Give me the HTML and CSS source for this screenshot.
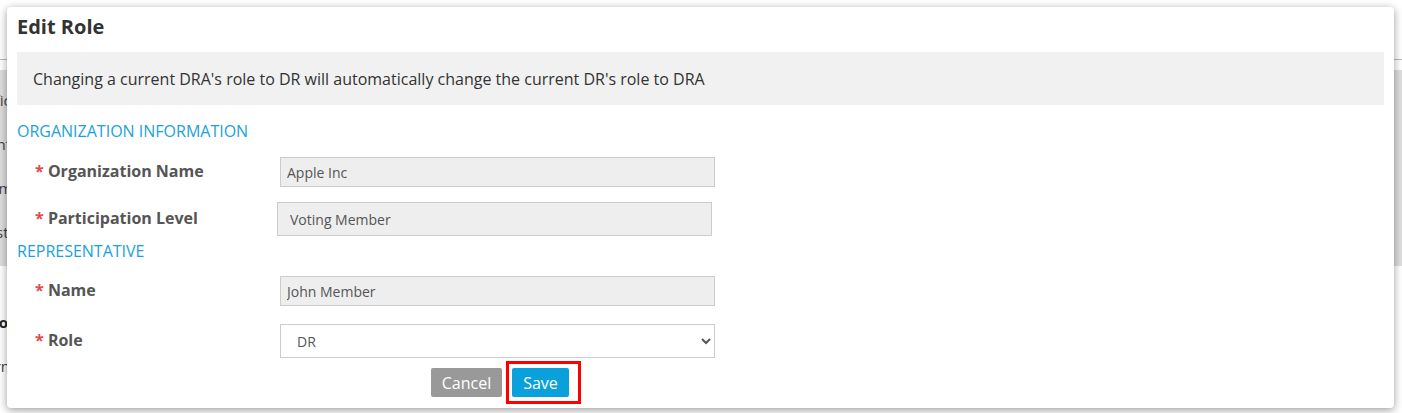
FILE: index.html
```html
<!doctype html>
<html lang="en">
<head>
    <meta charset="UTF-8">
    <meta name="viewport" content="width=device-width, initial-scale=1.0">
    <title>Edit Role</title>
    <link rel="stylesheet" href="styles.css">
</head>
<body>
    <!-- Page behind the dialog -->
    <div class="page">
        <div class="page-header"></div>
        <div class="page-band">
            <p class="cut">Office</p>
            <p class="cut">Contact</p>
            <p class="cut">Number</p>
            <p class="cut">Postal</p>
        </div>
        <p class="cut bold">Info</p>
        <p class="cut">Term</p>
    </div>

    <!-- Edit Role dialog -->
    <div class="modal">
        <h2 class="modal-title">Edit Role</h2>
        <div class="notice">Changing a current DRA's role to DR will automatically change the current DR's role to DRA</div>

        <form class="role-form">
            <h3 class="section-title">ORGANIZATION INFORMATION</h3>
            <div class="field first">
                <label><span class="req">*</span> Organization Name</label>
                <input type="text" value="Apple Inc" readonly>
            </div>
            <div class="field level">
                <label><span class="req">*</span> Participation Level</label>
                <input type="text" value="Voting Member" readonly>
            </div>

            <h3 class="section-title rep">REPRESENTATIVE</h3>
            <div class="field name">
                <label><span class="req">*</span> Name</label>
                <input type="text" value="John Member" readonly>
            </div>
            <div class="field role">
                <label><span class="req">*</span> Role</label>
                <select>
                    <option>DR</option>
                    <option>DRA</option>
                </select>
            </div>

            <div class="actions">
                <button type="button" class="btn cancel">Cancel</button>
                <span class="highlight"><button type="submit" class="btn save">Save</button></span>
            </div>
        </form>
    </div>
</body>
</html>
```

FILE: styles.css
```css
/* General Styles */
body {
    margin: 0;
    font-family: 'Open Sans', sans-serif;
    background-color: #fff;
    color: #333;
    overflow: hidden;
}

/* Page behind the dialog */
.page {
    height: 413px;
}

.page-header {
    height: 59px;
    border-bottom: 1px solid #bbb;
    margin-bottom: 10px;
}

.page-band {
    background-color: #dedede;
    height: 196px;
    padding-top: 20px;
    box-sizing: border-box;
}

.cut {
    margin: 0 0 24px -22px;
    font-size: 15px;
    line-height: 20px;
    color: #444;
}

.page > .cut:first-of-type {
    margin-top: 46px;
}

.cut.bold {
    font-weight: bold;
    color: #222;
}

/* Dialog */
.modal {
    position: absolute;
    left: 7px;
    top: 7px;
    width: 1387px;
    height: 401px;
    box-sizing: border-box;
    padding: 7px 10px 0;
    background-color: #fff;
    border-radius: 4px;
    box-shadow: 0 2px 9px rgba(0, 0, 0, 0.4);
}

.modal-title {
    margin: 0;
    font-size: 20px;
    line-height: 26px;
    font-weight: bold;
    color: #333;
}

.notice {
    margin-top: 12px;
    height: 53px;
    padding: 0 16px;
    display: flex;
    align-items: center;
    background-color: #f1f1f1;
    font-size: 16px;
    color: #333;
}

/* Form */
.role-form {
    width: 700px;
}

.section-title {
    margin: 16px 0 0;
    font-size: 16px;
    line-height: 20px;
    font-weight: normal;
    color: #1ba1db;
}

.section-title.rep {
    margin-top: 5px;
}

.field {
    display: grid;
    grid-template-columns: 263px 435px;
    align-items: center;
}

.field.first {
    margin-top: 16px;
}

.field.name,
.field.level {
    margin-top: 15px;
}

.field.role {
    margin-top: 18px;
}

.field label {
    padding: 0 0 2px 18px;
    font-size: 16px;
    line-height: 20px;
    font-weight: bold;
    color: #555;
}

.req {
    color: #e5474b;
}

input, select {
    width: 435px;
    height: 30px;
    box-sizing: border-box;
    border: 1px solid #ccc;
    font-family: 'Open Sans', sans-serif;
    font-size: 14px;
    color: #555;
}

input {
    padding: 0 6px;
    background-color: #eee;
    outline: none;
}

.field.level input {
    height: 34px;
    margin-left: -3px;
    padding: 0 12px;
}

select {
    height: 34px;
    padding: 0 12px;
    background-color: #fff;
}

/* Buttons */
.actions {
    display: flex;
    align-items: center;
    gap: 4px;
    margin: 3px 0 0 414px;
}

.btn {
    height: 29px;
    padding: 0 10px;
    border: none;
    border-radius: 2px;
    font-family: 'Open Sans', sans-serif;
    font-size: 16px;
    color: #fff;
    cursor: pointer;
}

.cancel {
    width: 71px;
    background-color: #999;
}

.save {
    width: 57px;
    background-color: #0aa0dc;
}

.highlight {
    display: flex;
    border: 3px solid #f00;
    padding: 4px 9px 4px 3px;
}
```
